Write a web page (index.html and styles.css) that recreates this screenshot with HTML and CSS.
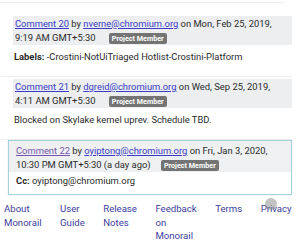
FILE: index.html
```html
<!DOCTYPE html>
<html lang="en">
<head>
    <meta charset="UTF-8">
    <meta name="viewport" content="width=device-width, initial-scale=1.0">
    <title>Issue comments</title>
    <link rel="stylesheet" href="styles.css">
</head>
<body>
    <div class="comments">
        <div class="prev-comment"></div>

        <div class="comment">
            <div class="comment-header">
                <a href="#">Comment 20</a> by <a href="#">nverne@chromium.org</a> on Mon, Feb 25, 2019, 9:19 AM GMT+5:30 <span class="badge">Project Member</span>
            </div>
            <div class="comment-body"><b>Labels:</b> -Crostini-NotUiTriaged Hotlist-Crostini-Platform</div>
        </div>

        <div class="comment">
            <div class="comment-header">
                <a href="#">Comment 21</a> by <a href="#">dgreid@chromium.org</a> on Wed, Sep 25, 2019, 4:11 AM GMT+5:30 <span class="badge">Project Member</span>
            </div>
            <div class="comment-body">Blocked on Skylake kernel uprev. Schedule TBD.</div>
        </div>

        <div class="comment highlighted">
            <div class="comment-header">
                <a href="#" class="visited">Comment 22</a> by <a href="#">oyiptong@chromium.org</a> on Fri, Jan 3, 2020, 10:30 PM GMT+5:30 (a day ago) <span class="badge">Project Member</span>
            </div>
            <div class="comment-body"><b>Cc:</b> oyiptong@chromium.org</div>
        </div>
    </div>

    <div class="footer">
        <a href="#">About Monorail</a>
        <a href="#">User Guide</a>
        <a href="#">Release Notes</a>
        <a href="#">Feedback on Monorail</a>
        <a href="#">Terms</a>
        <a href="#" class="privacy">Privacy<span class="touch-dot"></span></a>
    </div>
</body>
</html>
```

FILE: styles.css
```css
* {
    margin: 0;
    padding: 0;
    box-sizing: border-box;
}

body {
    background: #fff;
    color: #2a2a2a;
    font-family: Roboto, 'Liberation Sans', sans-serif;
    font-size: 9.4px;
    line-height: 14px;
}

a {
    color: #3a3ac6;
}

/* 评论列表 */
.comments {
    width: 292px;
}

.prev-comment {
    height: 3px;
    width: 284px;
    border-bottom: 1px solid #ececec;
}

.comment {
    margin-top: 13px;
    border-bottom: 1px solid #efefef;
    padding-bottom: 12px;
}

.comment + .comment {
    margin-top: 2px;
}

.comment-header {
    margin-left: 13px;
    padding: 1px 2px 0 2px;
    background: #eceef0;
}

.comment-body {
    margin-left: 13px;
    padding: 5px 1px 0 1px;
}

.badge {
    display: inline-block;
    margin-left: 11px;
    padding: 0 3px;
    background: #747474;
    color: #fff;
    font-size: 7.2px;
    font-weight: bold;
    line-height: 11px;
    border-radius: 2px;
}

/* 当前高亮的评论 */
.comment.highlighted {
    margin-top: 0;
    margin-left: 8px;
    border: 1px solid #a3d2dc;
    padding-bottom: 6px;
    box-shadow: 0 0 1px rgba(80, 160, 180, 0.3);
}

.highlighted .comment-header {
    margin-left: 0;
    padding: 3px 7px 0 7px;
    background: #eef0f2;
}

.highlighted .comment-body {
    margin-left: 0;
    padding: 2px 7px 0 7px;
}

.highlighted .badge {
    margin-left: 8px;
}

a.visited {
    color: #7356ac;
}

/* 页脚链接 */
.footer {
    display: flex;
    gap: 18.5px;
    padding: 7px 0 0 4px;
    font-size: 9.6px;
    line-height: 13.5px;
}

.footer a {
    width: min-content;
    color: #3d3da0;
    text-decoration: none;
}

.privacy {
    position: relative;
}

.touch-dot {
    position: absolute;
    left: 4px;
    top: -4px;
    width: 12px;
    height: 12px;
    border-radius: 50%;
    background: rgba(120, 120, 120, 0.45);
}
```
